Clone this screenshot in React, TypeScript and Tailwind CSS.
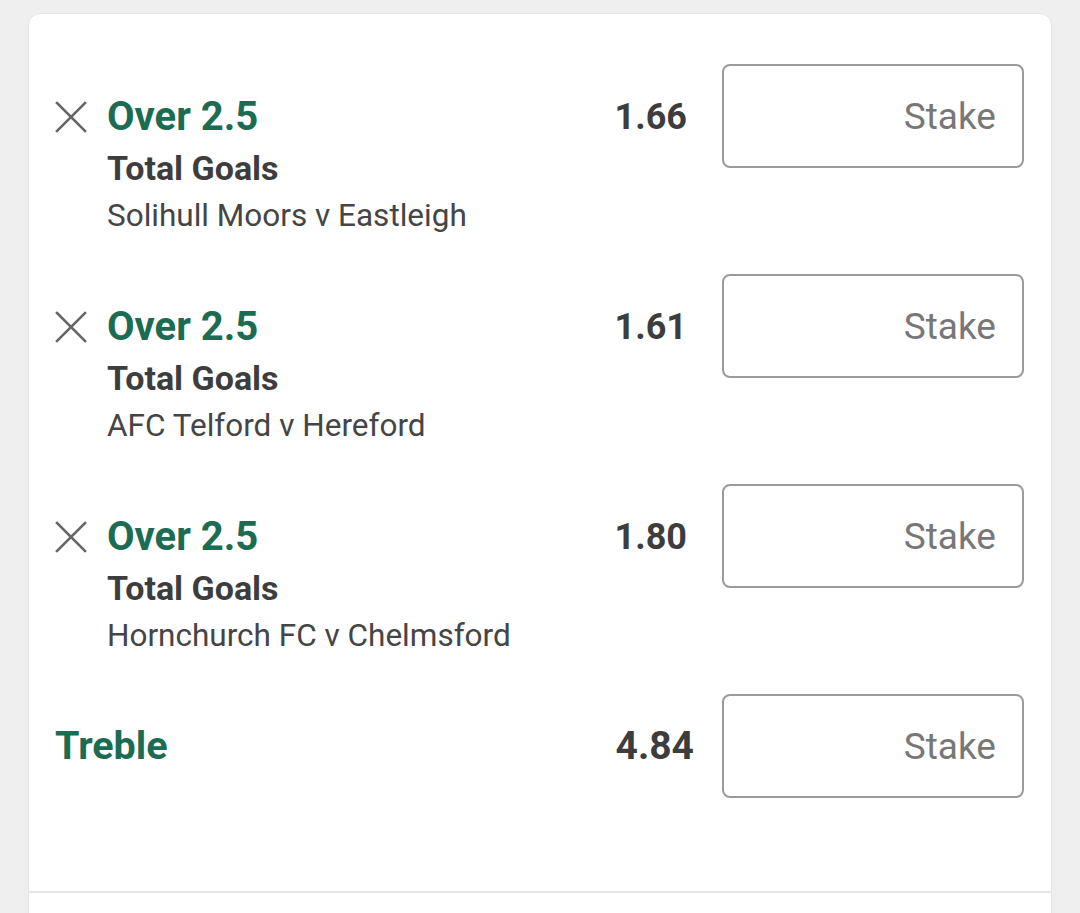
type Selection = {
  id: number;
  name: string;
  market: string;
  event: string;
  odds: string;
};

const selections: Selection[] = [
  { id: 1, name: 'Over 2.5', market: 'Total Goals', event: 'Solihull Moors v Eastleigh', odds: '1.66' },
  { id: 2, name: 'Over 2.5', market: 'Total Goals', event: 'AFC Telford v Hereford', odds: '1.61' },
  { id: 3, name: 'Over 2.5', market: 'Total Goals', event: 'Hornchurch FC v Chelmsford', odds: '1.80' },
];

function RemoveIcon() {
  return (
    <svg width="32" height="32" viewBox="0 0 32 32" fill="none" stroke="#666666" strokeWidth="2.6" strokeLinecap="square">
      <line x1="2" y1="2" x2="30" y2="30" />
      <line x1="30" y1="2" x2="2" y2="30" />
    </svg>
  );
}

function StakeBox() {
  return (
    <div className="w-[302px] h-[104px] shrink-0 rounded-[8px] border-2 border-[#9b9b9b] bg-white flex items-center justify-end pr-[26px]">
      <span className="text-[37px] text-[#777777] leading-none">Stake</span>
    </div>
  );
}

function SelectionRow({ s }: { s: Selection }) {
  return (
    <div className="h-[210px] flex items-start">
      {/* ── Remove + details ── */}
      <div className="flex-1 flex items-start pt-[31px]">
        <button className="w-[32px] h-[44px] flex items-center justify-center shrink-0">
          <RemoveIcon />
        </button>
        <div className="ml-[20px] flex flex-col">
          <span className="text-[40px] leading-[44px] font-bold text-[#1c6b53]">{s.name}</span>
          <span className="mt-[6px] text-[34px] leading-[46px] font-bold text-[#3d3d3d]">{s.market}</span>
          <span className="mt-[1px] text-[31.5px] leading-[47px] text-[#454545]">{s.event}</span>
        </div>
      </div>

      {/* ── Odds ── */}
      <span className="mt-[31px] mr-[35px] text-[36px] leading-[44px] font-bold text-[#3d3d3d]">{s.odds}</span>

      <StakeBox />
    </div>
  );
}

export default function App() {
  return (
    <div
      className="w-[1080px] h-[913px] overflow-hidden bg-[#efefef] pt-[13px] px-[28px]"
      style={{ fontFamily: 'Roboto, "Liberation Sans", sans-serif' }}
    >
      <div className="h-[940px] bg-white rounded-t-[12px] border border-[#e4e4e4] flex flex-col">
        <div className="pl-[26px] pr-[27px] pt-[50px]">
          {selections.map((s) => (
            <SelectionRow key={s.id} s={s} />
          ))}

          {/* ── Treble ── */}
          <div className="flex items-center">
            <span className="flex-1 text-[39.5px] font-bold text-[#1c6b53] leading-none">Treble</span>
            <span className="mr-[28px] text-[39px] font-bold text-[#3d3d3d] leading-none">4.84</span>
            <StakeBox />
          </div>
        </div>

        <div className="mt-[93px] border-t-2 border-[#e6e6e6]" />
      </div>
    </div>
  );
}
